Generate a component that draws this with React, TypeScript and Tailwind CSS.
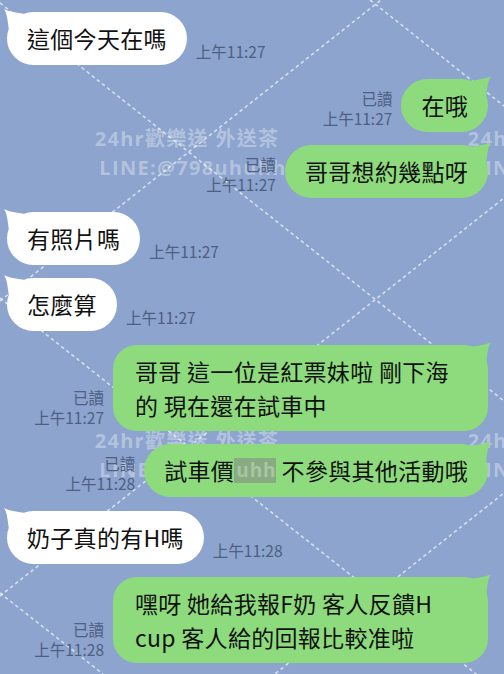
import React from "react";

const GREEN = "#8edb7d";

function Tail({ side, color }: { side: "left" | "right"; color: string }) {
  return (
    <svg
      className={
        side === "left"
          ? "absolute left-[-4px] top-[-4px]"
          : "absolute right-[-4px] top-[-4px] -scale-x-100"
      }
      width="26"
      height="26"
      viewBox="0 0 26 26"
    >
      <path d="M1 1 C 4 5, 4.5 12, 6 22 L 22 6 C 13 4.5, 6 4, 1 1 Z" fill={color} />
    </svg>
  );
}

function Time({ t }: { t: string }) {
  return <span className="mb-[4px] text-[15.5px] leading-[20px] text-[#4e5f80] whitespace-nowrap">{t}</span>;
}

function Read({ t }: { t: string }) {
  return (
    <div className="mb-[4px] flex flex-col items-end text-[15.5px] leading-[20px] text-[#4e5f80] whitespace-nowrap">
      <span>已讀</span>
      <span>{t}</span>
    </div>
  );
}

function Left({ text, t }: { text: React.ReactNode; t: string }) {
  return (
    <div className="flex items-end gap-[9px] pl-[7px]">
      <div className="relative flex h-[53px] items-center rounded-[26.5px] bg-white px-[20px] text-[23px] tracking-[0.3px] text-[#111] whitespace-nowrap">
        <Tail side="left" color="#ffffff" />
        <span className="relative">{text}</span>
      </div>
      <Time t={t} />
    </div>
  );
}

function Right({ text, t }: { text: React.ReactNode; t: string }) {
  return (
    <div className="flex items-end justify-end gap-[9px] pr-[16px]">
      <Read t={t} />
      <div className="relative flex h-[53px] items-center rounded-[26.5px] bg-[#8edb7d] px-[20px] text-[23px] tracking-[0.3px] text-[#111] whitespace-nowrap">
        <Tail side="right" color={GREEN} />
        <span className="relative flex items-center">{text}</span>
      </div>
    </div>
  );
}

function RightDouble({ l1, l2, t }: { l1: string; l2: string; t: string }) {
  return (
    <div className="flex items-end justify-end gap-[9px] pr-[16px]">
      <Read t={t} />
      <div className="relative h-[86px] w-[375px] rounded-[24px] bg-[#8edb7d] py-[9px] pl-[22px] text-[23px] leading-[34px] tracking-[0.3px] text-[#111] whitespace-nowrap">
        <Tail side="right" color={GREEN} />
        <div className="relative">{l1}</div>
        <div className="relative">{l2}</div>
      </div>
    </div>
  );
}

function Watermark({ cls }: { cls: string }) {
  return (
    <div
      className={
        "absolute w-[220px] text-center font-['Open_Sans','Noto_Sans_CJK_TC',sans-serif] text-[20px] font-bold leading-[29px] tracking-[1.3px] text-white/35 whitespace-nowrap " +
        cls
      }
    >
      <div className="pr-[4px]">24hr歡樂送 外送茶</div>
      <div className="pl-[8px]">LINE:@798uhuhh</div>
    </div>
  );
}

export default function App() {
  const lines: [number, number, number, number][] = [
    [370, 0, 504, 106],
    [0, 3, 504, 401],
    [0, 298, 504, 696],
    [0, 593, 103, 674],
    [0, 301, 381, 0],
    [0, 596, 504, 198],
    [0, 891, 504, 493],
  ];
  return (
    <div className="relative h-[674px] w-[504px] overflow-hidden bg-[#8ca4ce] font-['Noto_Sans_CJK_TC','Noto_Sans',sans-serif]">
      <svg className="absolute inset-0" width="504" height="674" viewBox="0 0 504 674">
        {lines.map((l, i) => (
          <line
            key={i}
            x1={l[0]}
            y1={l[1]}
            x2={l[2]}
            y2={l[3]}
            stroke="#ffffff"
            strokeOpacity="0.65"
            strokeWidth="1.6"
            strokeDasharray="3.5 3"
          />
        ))}
      </svg>
      <Watermark cls="left-[79px] top-[124px]" />
      <Watermark cls="left-[452px] top-[124px]" />
      <Watermark cls="left-[79px] top-[426px]" />
      <Watermark cls="left-[452px] top-[426px]" />

      <div className="relative flex flex-col gap-[13.5px] pt-[12px]">
        <Left text="這個今天在嗎" t="上午11:27" />
        <Right text="在哦" t="上午11:27" />
        <Right text="哥哥想約幾點呀" t="上午11:27" />
        <Left text="有照片嗎" t="上午11:27" />
        <Left text="怎麼算" t="上午11:27" />
        <RightDouble l1="哥哥 這一位是紅票妹啦 剛下海" l2="的 現在還在試車中" t="上午11:27" />
        <Right
          text={
            <>
              <span>試車價</span>
              <span className="inline-flex h-[25px] w-[42px] items-center overflow-hidden bg-[#88ab82] pl-[2px] font-['Open_Sans',sans-serif] text-[19px] font-bold tracking-[1px] text-[#a8c6a2]">
                uhh
              </span>
              <span>&nbsp;不參與其他活動哦</span>
            </>
          }
          t="上午11:28"
        />
        <Left text="奶子真的有H嗎" t="上午11:28" />
        <RightDouble l1="嘿呀 她給我報F奶 客人反饋H" l2="cup 客人給的回報比較准啦" t="上午11:28" />
      </div>
    </div>
  );
}
